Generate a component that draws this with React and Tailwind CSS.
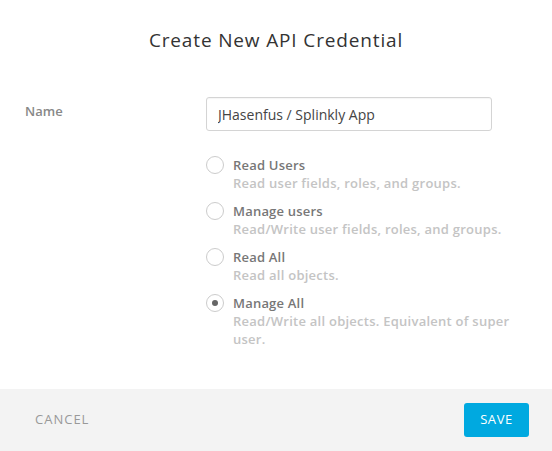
import React, { useState } from 'react';

const scopes = [
  { id: 'read_users', title: 'Read Users', desc: 'Read user fields, roles, and groups.' },
  { id: 'manage_users', title: 'Manage users', desc: 'Read/Write user fields, roles, and groups.' },
  { id: 'read_all', title: 'Read All', desc: 'Read all objects.' },
  { id: 'manage_all', title: 'Manage All', desc: 'Read/Write all objects. Equivalent of super user.' },
];

const App = () => {
  const [name, setName] = useState('JHasenfus / Splinkly App');
  const [scope, setScope] = useState('manage_all');

  return (
    <div className="w-[552px] h-[451px] bg-white flex flex-col font-['Open_Sans',sans-serif]">
      <div className="flex-1">
        <h1 className="text-center text-[19px] text-[#333] pt-[28px] leading-[25px] tracking-[0.85px]">
          Create New API Credential
        </h1>

        <div className="flex mt-[44px] pl-[25px]">
          <label className="w-[181px] pt-[5px] text-[13px] font-semibold text-[#888]">Name</label>
          <input
            className="w-[286px] h-[34px] border border-[#d4d4d4] rounded-[3px] px-[11px] text-[14px] text-[#444] outline-none shadow-[inset_0_1px_1px_rgba(0,0,0,0.04)]"
            value={name}
            onChange={(e) => setName(e.target.value)}
          />
        </div>

        <div className="flex flex-col gap-[10px] mt-[25px] pl-[206px]">
          {scopes.map((s) => (
            <label key={s.id} className="flex cursor-pointer" onClick={() => setScope(s.id)}>
              <span className="w-[18px] h-[18px] rounded-full border border-[#ccc] flex items-center justify-center shrink-0">
                {scope === s.id && <span className="w-[6px] h-[6px] rounded-full bg-[#666]" />}
              </span>
              <span className="ml-[9px] w-[285px]">
                <span className="block text-[13px] leading-[18px] font-semibold text-[#777] tracking-[0.2px]">{s.title}</span>
                <span className="block text-[13px] leading-[18px] font-semibold text-[#c4c4c4] tracking-[0.25px]">{s.desc}</span>
              </span>
            </label>
          ))}
        </div>
      </div>

      <div className="h-[62px] bg-[#f3f3f3] flex items-center justify-between pl-[35px] pr-[23px]">
        <button className="text-[13px] text-[#999] uppercase tracking-[1px]">Cancel</button>
        <button className="w-[65px] h-[34px] rounded-[3px] bg-[#00a9e0] text-white text-[13px] uppercase tracking-[0.6px]">
          Save
        </button>
      </div>
    </div>
  );
};

export default App;
